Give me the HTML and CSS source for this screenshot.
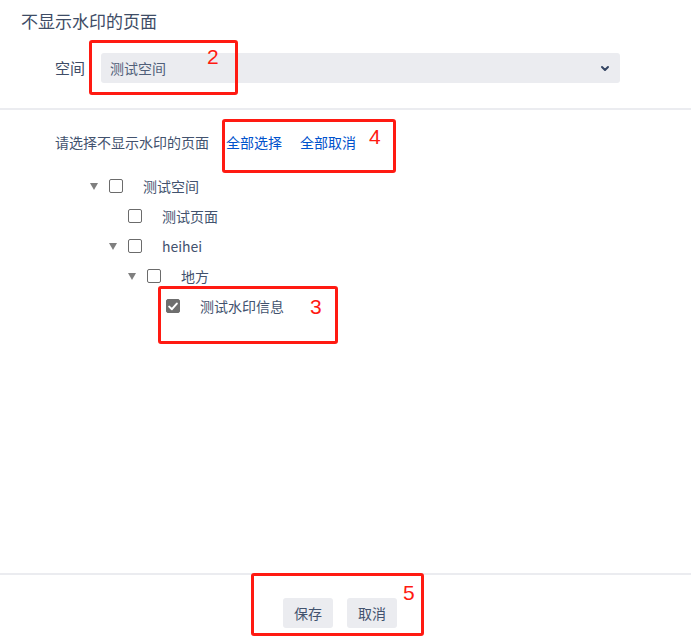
FILE: index.html
```html
<!DOCTYPE html>
<html lang="zh-CN">
<head>
<meta charset="utf-8">
<title>不显示水印的页面</title>
<link rel="stylesheet" href="styles.css">
</head>
<body>
<div class="page">
  <div class="header">
    <div class="title">不显示水印的页面</div>
    <div class="form-row">
      <span class="label">空间</span>
      <div class="select">
        <span class="select-text">测试空间</span>
        <svg class="chevron" width="10" height="7" viewBox="0 0 10 7"><path d="M2 2 L5 5 L8 2" fill="none" stroke="#344563" stroke-width="2" stroke-linecap="round" stroke-linejoin="round"/></svg>
      </div>
    </div>
  </div>
  <div class="main">
    <div class="pick-row">
      <span class="pick-text">请选择不显示水印的页面</span>
      <span class="links">
        <a class="link">全部选择</a>
        <a class="link">全部取消</a>
      </span>
    </div>
    <div class="tree">
      <div class="node lvl0"><span class="toggle"><span class="tri"></span></span><span class="cb"></span><span class="node-text">测试空间</span></div>
      <div class="node lvl1"><span class="toggle"></span><span class="cb"></span><span class="node-text">测试页面</span></div>
      <div class="node lvl1"><span class="toggle"><span class="tri"></span></span><span class="cb"></span><span class="node-text">heihei</span></div>
      <div class="node lvl2"><span class="toggle"><span class="tri"></span></span><span class="cb"></span><span class="node-text">地方</span></div>
      <div class="node lvl3"><span class="toggle"></span><span class="cb checked"><svg width="10" height="9" viewBox="0 0 10 9"><path d="M1.2 4.6 L3.9 7.2 L8.8 1.6" fill="none" stroke="#fff" stroke-width="2" stroke-linecap="round" stroke-linejoin="round"/></svg></span><span class="node-text">测试水印信息</span></div>
    </div>
  </div>
  <div class="footer">
    <button class="btn">保存</button>
    <button class="btn">取消</button>
  </div>

  <div class="mark mark2"><span class="num num2">2</span></div>
  <div class="mark mark4"><span class="num num4">4</span></div>
  <div class="mark mark3"><span class="num num3">3</span></div>
  <div class="mark mark5"><span class="num num5">5</span></div>
</div>
</body>
</html>
```

FILE: styles.css
```css
* { box-sizing: border-box; }
html, body { margin: 0; padding: 0; background: #fff; }
body {
  font-family: "Noto Sans CJK SC", "Noto Sans", sans-serif;
  color: #42526e;
}
.page {
  position: relative;
  height: 100vh;
  display: flex;
  flex-direction: column;
}
.header {
  padding-top: 9px;
  border-bottom: 2px solid #ebecf0;
  padding-bottom: 25px;
}
.title {
  margin-left: 21px;
  font-size: 17px;
  line-height: 24px;
  color: #3e4c66;
}
.form-row {
  margin-top: 20px;
  padding-left: 55px;
  display: flex;
  align-items: center;
  gap: 16px;
}
.label {
  font-size: 15px;
  line-height: 20px;
  color: #3e4c66;
  width: 30px;
}
.select {
  width: 519px;
  height: 30px;
  background: #ebecf0;
  border-radius: 3px;
  display: flex;
  align-items: center;
  justify-content: space-between;
  padding: 0 10px 0 9px;
}
.select-text {
  font-size: 14px;
  color: #505f79;
}
.chevron { display: block; }
.main {
  flex: 1;
  padding-top: 22px;
}
.pick-row {
  padding-left: 55px;
  display: flex;
  align-items: center;
  gap: 17px;
  height: 20px;
}
.pick-text {
  font-size: 14px;
  color: #42526e;
}
.links { display: flex; gap: 18px; }
.link {
  font-size: 14px;
  color: #0052cc;
  text-decoration: none;
}
.tree {
  margin-top: 19px;
  padding-left: 90px;
}
.node {
  height: 30px;
  display: flex;
  align-items: center;
}
.lvl1 { padding-left: 19px; }
.lvl2 { padding-left: 38px; }
.lvl3 { padding-left: 57px; }
.toggle {
  width: 19px;
  height: 14px;
  display: flex;
  align-items: center;
}
.tri {
  width: 0;
  height: 0;
  border-left: 4px solid transparent;
  border-right: 4px solid transparent;
  border-top: 7px solid #7f7f7f;
  margin-top: 1px;
}
.cb {
  width: 14px;
  height: 14px;
  border: 1px solid #6b6b6b;
  border-radius: 2px;
  background: #fff;
  display: flex;
  align-items: center;
  justify-content: center;
}
.cb.checked {
  background: #6e6e6e;
  border-color: #6e6e6e;
}
.cb svg { display: block; }
.node-text {
  margin-left: 20px;
  font-size: 14px;
  color: #42526e;
  line-height: 20px;
}
.footer {
  border-top: 2px solid #ebecf0;
  height: 68px;
  padding-top: 23px;
  padding-right: 11px;
  display: flex;
  justify-content: center;
  align-items: flex-start;
  gap: 14px;
}
.btn {
  height: 30px;
  padding: 0 11px;
  border: none;
  border-radius: 3px;
  background: #ebecf0;
  font-family: "Noto Sans CJK SC", "Noto Sans", sans-serif;
  font-size: 14px;
  color: #42526e;
}
.mark {
  position: absolute;
  border: 3px solid #ff1a12;
  border-radius: 3px;
}
.mark2 { left: 89px; top: 40px; width: 149px; height: 55px; }
.mark4 { left: 222px; top: 119px; width: 174px; height: 54px; }
.mark3 { left: 158px; top: 286px; width: 180px; height: 58px; }
.mark5 { left: 251px; top: 573px; width: 173px; height: 63px; }
.num {
  position: absolute;
  font-family: "Liberation Sans", Arial, sans-serif;
  font-size: 21px;
  line-height: 1;
  color: #ff1a12;
}
.num2 { left: 115px; top: 3px; }
.num4 { left: 144px; top: 4px; }
.num3 { left: 149px; top: 7px; }
.num5 { left: 149px; top: 6px; }
```
